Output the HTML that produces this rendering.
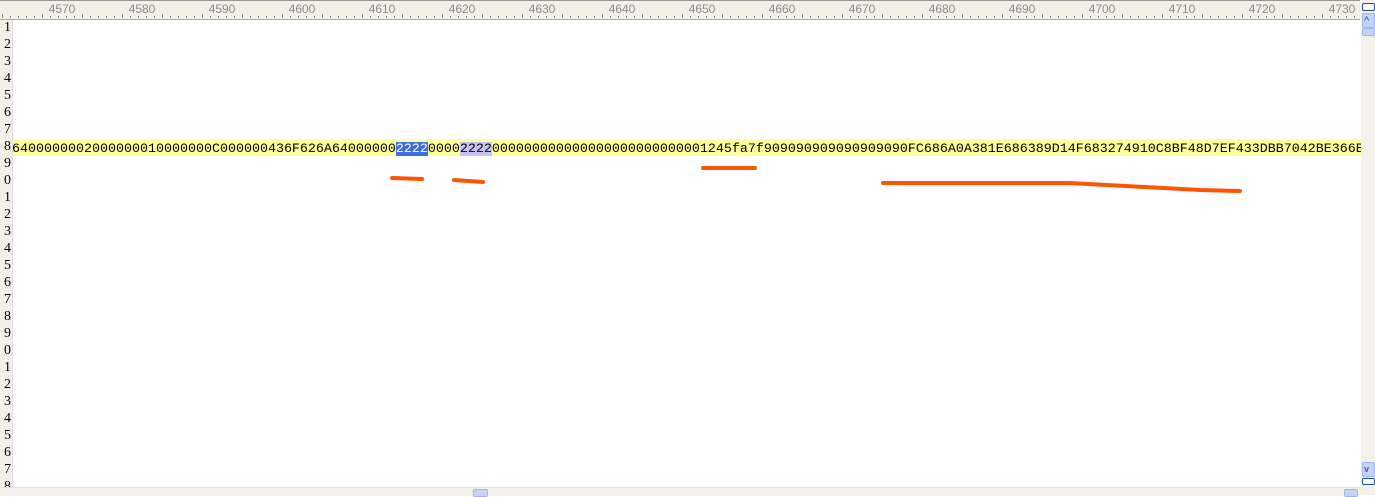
<!DOCTYPE html><html><head><style>
body{margin:0;width:1375px;height:495px;overflow:hidden;background:#fff;position:relative;font-family:"Liberation Mono",monospace}
.ruler{position:absolute;left:0;top:0;width:1360px;height:18px;background:#f3f1e6;border-top:1px solid #999;border-bottom:1px solid #aaa;overflow:hidden}
.rl{position:absolute;top:1px;font:12px "Liberation Sans",sans-serif;color:#8a8a8a;transform:translateX(-50%)}
.gut{position:absolute;left:0;top:20px;width:12px;height:467px;background:#f3f1e6;border-right:1px solid #ddd;overflow:hidden}
.gut div{height:17px;line-height:17px;font:14px "Liberation Serif",serif;text-align:right;padding-right:1px;color:#000}
.line{position:absolute;left:13px;top:139px;width:1348px;height:17px;background:#ffff99;overflow:hidden;white-space:nowrap}
.line span{font-size:13.33px;line-height:17px}
.sel{background:#3d6ee0;color:#fff}.sel2{background:#c4c4f4}
.vs{position:absolute;left:1361px;top:0;width:14px;height:495px;background:#f3f1ea}
.hs{position:absolute;left:0;top:487px;width:1361px;height:8px;background:#f3f1ea;border-top:1px solid #e4e2d8}
.btn{position:absolute;background:#c4d3fb;border:1px solid #9fb4e8;border-radius:2px}
</style></head><body>
<div class="ruler" id="r"></div>
<div class="gut" id="g"></div>
<div class="line"><span style="margin-left:-1px">6400000002000000010000000C000000436F626A64000000</span><span class="sel">2222</span><span>0000</span><span class="sel2">2222</span><span>000000000000000000000000001245fa7f909090909090909090FC686A0A381E686389D14F683274910C8BF48D7EF433DBB7042BE366BB3</span></div>
<div class="vs"><div class="btn" style="left:1px;top:3px;width:11px;height:6px;background:#fff;border-color:#1d4c8c"></div><div class="btn" style="left:1px;top:13px;width:11px;height:13px"></div><div style="position:absolute;left:3px;top:15px;font:bold 9px sans-serif;color:#4d6185">^</div><div class="btn" style="left:1px;top:28px;width:11px;height:6px"></div>
<div class="btn" style="left:1px;top:462px;width:11px;height:13px"></div><div style="position:absolute;left:3px;top:464px;font:bold 9px sans-serif;color:#4d6185">v</div><div class="btn" style="left:1px;top:478px;width:11px;height:5px;background:#fff;border-color:#1d4c8c"></div></div>
<div class="hs"><div class="btn" style="left:473px;top:1px;width:13px;height:6px"></div><div class="btn" style="left:1344px;top:1px;width:12px;height:6px"></div></div>
<svg style="position:absolute;left:0;top:0" width="1375" height="495"><g stroke="#ff5500" stroke-width="4" stroke-linecap="round" fill="none">
<path d="M392 178 L422 179"/><path d="M454 180 L483 182"/><path d="M703 168 L755 168"/><path d="M883 183 L1070 183 L1200 190 L1240 191"/></g></svg>
<script>
var r=document.getElementById('r'),h='';
for(var i=0;i<172;i++){var x=2+i*8;h+='<div style="position:absolute;left:'+x+'px;top:'+(i%5==0?13:15)+'px;width:1px;height:'+(i%5==0?4:2)+'px;background:#888"></div>';}
for(var k=0;k<17;k++){h+='<div class="rl" style="left:'+(62+80*k)+'px">'+(4570+10*k)+'</div>';}
r.innerHTML=h;
var g=document.getElementById('g'),s='';for(var i=1;i<=28;i++)s+='<div>'+(i%10)+'</div>';g.innerHTML=s;
</script>
</body></html>
